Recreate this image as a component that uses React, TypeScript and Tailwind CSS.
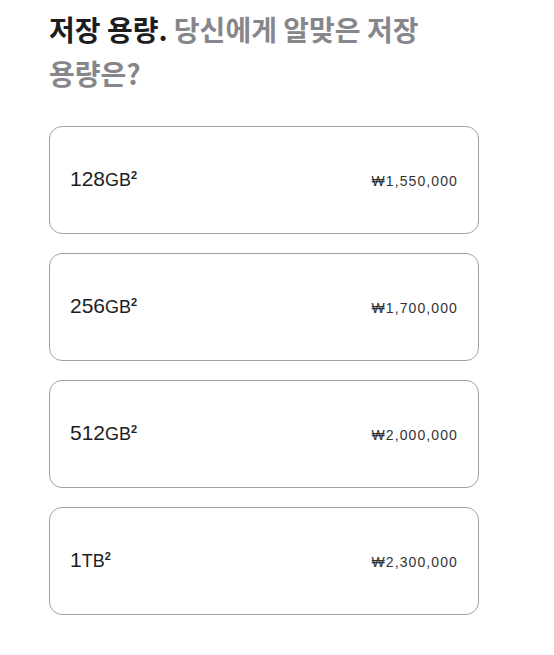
import React from "react";

const items = [
  { n: "128", u: "GB", p: "₩1,550,000" },
  { n: "256", u: "GB", p: "₩1,700,000" },
  { n: "512", u: "GB", p: "₩2,000,000" },
  { n: "1", u: "TB", p: "₩2,300,000" },
];

export default function App() {
  return (
    <div
      className="w-[554px] h-[655px] bg-white pl-[49px] pr-[75px] pt-[7px]"
      style={{ fontFamily: '"Liberation Sans", "Noto Sans CJK KR", sans-serif' }}
    >
      <h2
        className="text-[28px] leading-[44px] font-bold break-keep"
        style={{ fontFamily: '"Noto Sans CJK KR", "Noto Sans", sans-serif' }}
      >
        <span className="text-[#1d1d1f]">저장 용량.</span>{" "}
        <span className="text-[#86868b]">당신에게 알맞은 저장</span>{" "}
        <span className="text-[#86868b]">용량은?</span>
      </h2>
      <div className="mt-[31px] flex flex-col gap-[19px]">
        {items.map((it) => (
          <div
            key={it.n}
            className="h-[108px] rounded-[13px] border border-[#a3a3a3] flex items-center justify-between px-[20px]"
          >
            <div className="text-[#1d1d1f] flex items-baseline pb-[2px]">
              <span className="text-[21px]">{it.n}</span>
              <span className="text-[18px]">{it.u}</span>
              <span className="text-[11px] relative -top-[7px] font-bold">2</span>
            </div>
            <div className="text-[14px] text-[#333336] tracking-[1.1px] pt-[3px]">{it.p}</div>
          </div>
        ))}
      </div>
    </div>
  );
}
